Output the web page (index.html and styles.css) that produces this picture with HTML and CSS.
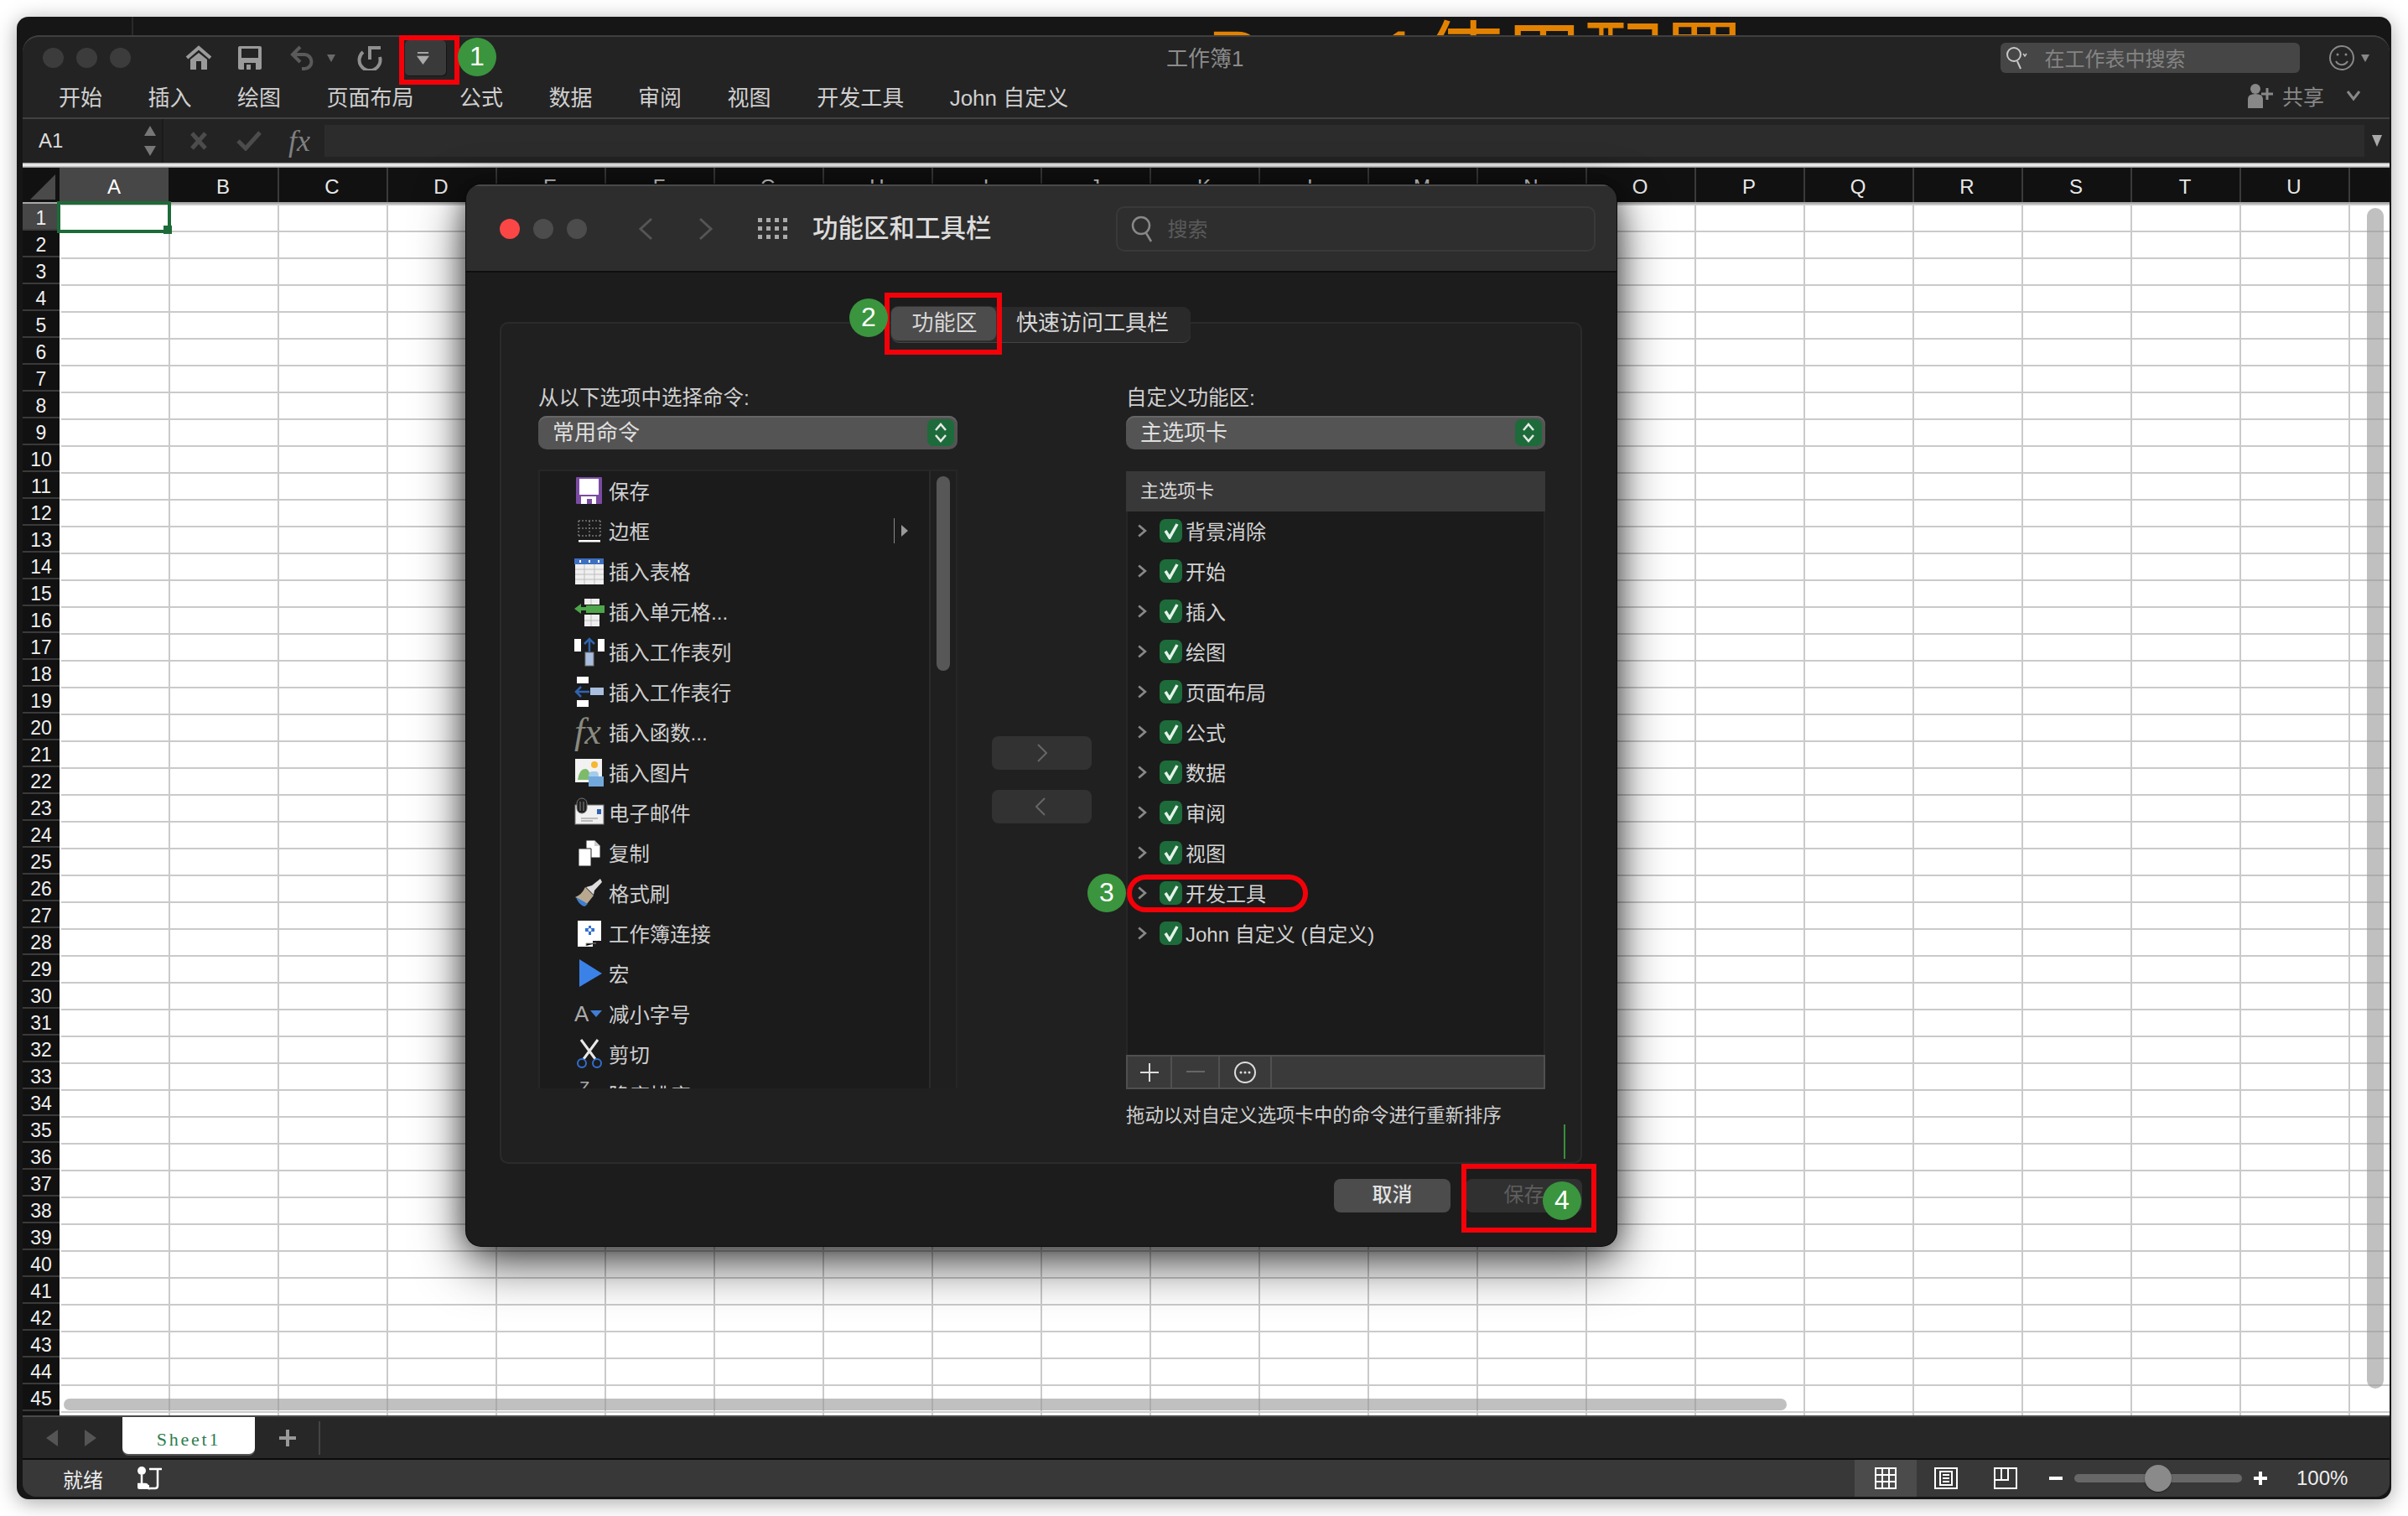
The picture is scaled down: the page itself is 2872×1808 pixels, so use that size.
FILE: index.html
```html
<!DOCTYPE html>
<html lang="zh">
<head>
<meta charset="utf-8">
<title>工作簿1</title>
<link rel="stylesheet" href="styles.css">
</head>
<body>
<div class="page">
  <div class="outer">
    <div class="strip"><span class="strip-line"></span><span class="strip-title">Part 1使用配置</span></div>
    <div class="app">
      <div class="toolbar">
        <div class="qat">
          <span class="tl"></span><span class="tl"></span><span class="tl"></span>
          <svg class="i-home" viewBox="0 0 32 30"><path d="M2 15 16 3l14 12" fill="none" stroke="#9a9a9a" stroke-width="4"/><path d="M6 17 16 9l10 8v12h-7V19h-6v10H6z" fill="#9a9a9a"/></svg>
          <svg class="i-save" viewBox="0 0 28 28"><path d="M2 0h24a2 2 0 0 1 2 2v24a2 2 0 0 1-2 2H2a2 2 0 0 1-2-2V2a2 2 0 0 1 2-2z" fill="#9a9a9a"/><rect x="4" y="3" width="20" height="11" fill="#232323"/><rect x="7" y="20" width="14" height="8" fill="#232323"/><rect x="10" y="22" width="5" height="6" fill="#9a9a9a"/></svg>
          <svg class="i-undo" viewBox="0 0 30 30"><path d="M12 2 3 11l9 9" fill="none" stroke="#5a5a5a" stroke-width="4"/><path d="M4 11h13a8.500 8.500 0 0 1 0 17h-3" fill="none" stroke="#5a5a5a" stroke-width="4"/></svg>
          <svg class="i-caret" viewBox="0 0 12 10"><path d="M1 1h10L6 10z" fill="#6a6a6a"/></svg>
          <svg class="i-redo" viewBox="0 0 32 30"><path d="M8 8a12.500 12.500 0 1 0 20 6" fill="none" stroke="#8f8f8f" stroke-width="4"/><path d="M29 3H16v14" fill="none" stroke="#8f8f8f" stroke-width="4"/></svg>
          <span class="qat-btn"><svg viewBox="0 0 16 16"><rect x="1" y="0" width="14" height="2" fill="#aaa"/><path d="M0 5h16l-8 11z" fill="#aaa"/></svg></span>
          <span class="doc-title">工作簿1</span>
          <span class="search"><svg viewBox="0 0 26 30"><circle cx="10" cy="11" r="8" fill="none" stroke="#c8c8c8" stroke-width="2"/><path d="m14 19 4 9" stroke="#c8c8c8" stroke-width="2"/><path d="m21 10 2 3 2-3" fill="none" stroke="#c8c8c8" stroke-width="1.500"/></svg><span>在工作表中搜索</span></span>
          <svg class="i-smile" viewBox="0 0 32 32"><circle cx="16" cy="16" r="14" fill="none" stroke="#888" stroke-width="2"/><circle cx="11" cy="12" r="1.500" fill="#888"/><circle cx="21" cy="12" r="1.500" fill="#888"/><path d="M9 20a8 8 0 0 0 14 0" fill="none" stroke="#888" stroke-width="2"/></svg>
          <svg class="i-caret2" viewBox="0 0 12 12"><path d="M1 2h10L6 11z" fill="#888"/></svg>
        </div>
        <div class="ribbon">
          <span>开始</span><span>插入</span><span>绘图</span><span>页面布局</span><span>公式</span><span>数据</span><span>审阅</span><span>视图</span><span>开发工具</span><span>John 自定义</span>
          <span class="share"><svg viewBox="0 0 34 30"><circle cx="10" cy="7" r="6" fill="#888"/><path d="M1 30V19q0-6 9-6t9 6v11z" fill="#888"/><path d="M24 6v14M17 13h14" stroke="#888" stroke-width="3"/></svg><b>共享</b><svg class="share-chev" viewBox="0 0 18 14"><path d="m2 2 7 9 7-9" fill="none" stroke="#888" stroke-width="3"/></svg></span>
        </div>
      </div>
      <div class="formula">
        <div class="namebox"><span>A1</span><svg viewBox="0 0 16 38"><path d="M8 1l7 12H1zM8 37l7-12H1z" fill="#777"/></svg></div>
        <svg class="f-x" viewBox="0 0 22 24"><path d="m3 3 16 18M19 3 3 21" stroke="#4c4c4c" stroke-width="5"/></svg>
        <svg class="f-check" viewBox="0 0 30 24"><path d="M2 12l9 9L28 2" fill="none" stroke="#4c4c4c" stroke-width="5"/></svg>
        <span class="f-fx">fx</span>
        <div class="f-input"></div>
        <svg class="f-drop" viewBox="0 0 12 14"><path d="M0 0h12L6 14z" fill="#aaa"/></svg>
      </div>
      <div class="rule"></div>
      <div class="colhead">
        <div class="corner"><svg viewBox="0 0 30 30"><path d="M30 0v30H0z" fill="#4a4a4a"/></svg></div>
        <span class="col active">A</span><span class="col">B</span><span class="col">C</span><span class="col">D</span><span class="col">E</span><span class="col">F</span><span class="col">G</span><span class="col">H</span><span class="col">I</span><span class="col">J</span><span class="col">K</span><span class="col">L</span><span class="col">M</span><span class="col">N</span><span class="col">O</span><span class="col">P</span><span class="col">Q</span><span class="col">R</span><span class="col">S</span><span class="col">T</span><span class="col">U</span><span class="col"></span>
      </div>
      <div class="sheet">
        <div class="rows">
          <span class="active">1</span><span>2</span><span>3</span><span>4</span><span>5</span><span>6</span><span>7</span><span>8</span><span>9</span><span>10</span><span>11</span><span>12</span><span>13</span><span>14</span><span>15</span><span>16</span><span>17</span><span>18</span><span>19</span><span>20</span><span>21</span><span>22</span><span>23</span><span>24</span><span>25</span><span>26</span><span>27</span><span>28</span><span>29</span><span>30</span><span>31</span><span>32</span><span>33</span><span>34</span><span>35</span><span>36</span><span>37</span><span>38</span><span>39</span><span>40</span><span>41</span><span>42</span><span>43</span><span>44</span><span>45</span>
        </div>
        <div class="grid">
          <div class="sel"><i></i></div>
          <div class="vscroll"></div>
          <div class="hscroll"></div>
        </div>
      </div>
      <div class="tabbar">
        <svg class="nav-l" viewBox="0 0 14 20"><path d="M14 0v20L0 10z" fill="#555"/></svg>
        <svg class="nav-r" viewBox="0 0 14 20"><path d="M0 0v20l14-10z" fill="#555"/></svg>
        <div class="sheet-tab">Sheet1</div>
        <svg class="add" viewBox="0 0 20 20"><path d="M10 0v20M0 10h20" stroke="#999" stroke-width="4"/></svg>
        <span class="tab-sep"></span>
      </div>
      <div class="status">
        <span class="ready">就绪</span>
        <svg class="macro" viewBox="0 0 30 28"><circle cx="5" cy="5" r="5" fill="#fff"/><path d="M5 10v11M0 21h9q3 0 3 3t3 2h6q3 0 3-3V3H14M24 3h5" fill="none" stroke="#fff" stroke-width="2.500"/><path d="M0 22h14v5H2q-2 0-2-2z" fill="#fff"/></svg>
        <span class="view-btn on"><svg class="v-icon" viewBox="0 0 26 26"><path d="M1 1h24v24H1zM1 9h24M1 17h24M9 1v24M17 1v24" fill="none" stroke="#fff" stroke-width="2"/></svg></span>
        <svg class="v-page" viewBox="0 0 28 26"><path d="M1 1h26v24H1z" fill="none" stroke="#fff" stroke-width="2"/><path d="M7 5h14v16H7z" fill="none" stroke="#fff" stroke-width="2"/><path d="M10 9h8M10 13h8M10 17h8" stroke="#fff" stroke-width="2"/></svg>
        <svg class="v-break" viewBox="0 0 28 26"><path d="M1 1h26v24H1zM1 15h16V1M9 1v14" fill="none" stroke="#fff" stroke-width="2"/></svg>
        <svg class="zoom-minus" viewBox="0 0 16 4"><rect width="16" height="4" fill="#fff"/></svg>
        <span class="slider"><i></i></span>
        <svg class="zoom-plus" viewBox="0 0 16 16"><path d="M8 0v16M0 8h16" stroke="#fff" stroke-width="4"/></svg>
        <span class="pct">100%</span>
      </div>
    </div>
  </div>

  <div class="dialog">
    <div class="dlg-head">
      <span class="dl red"></span><span class="dl"></span><span class="dl"></span>
      <svg class="dn first" viewBox="0 0 18 28"><path d="M16 2 3 14l13 12" fill="none" stroke="#555" stroke-width="3"/></svg>
      <svg class="dn second" viewBox="0 0 18 28"><path d="m2 2 13 12L2 26" fill="none" stroke="#555" stroke-width="3"/></svg>
      <svg class="dgrid" viewBox="0 0 35 25"><g fill="#aaa"><rect x="0" y="0" width="5" height="5"/><rect x="10" y="0" width="5" height="5"/><rect x="20" y="0" width="5" height="5"/><rect x="30" y="0" width="5" height="5"/><rect x="0" y="10" width="5" height="5"/><rect x="10" y="10" width="5" height="5"/><rect x="20" y="10" width="5" height="5"/><rect x="30" y="10" width="5" height="5"/><rect x="0" y="20" width="5" height="5"/><rect x="10" y="20" width="5" height="5"/><rect x="20" y="20" width="5" height="5"/><rect x="30" y="20" width="5" height="5"/></g></svg>
      <span class="dlg-title">功能区和工具栏</span>
      <span class="dlg-search"><svg viewBox="0 0 30 32"><circle cx="12" cy="12" r="10" fill="none" stroke="#888" stroke-width="2.500"/><path d="m18 21 6 10" stroke="#888" stroke-width="2.500"/></svg><span>搜索</span></span>
    </div>
    <div class="dlg-body">
      <div class="panel">
        <div class="segs"><span class="seg on">功能区</span><span class="seg">快速访问工具栏</span></div>
        <div class="pcol">
          <div class="plabel">从以下选项中选择命令:</div>
          <div class="select"><span>常用命令</span><span class="stepper"><svg viewBox="0 0 14 24"><path d="m1 9 6-7 6 7M1 15l6 7 6-7" fill="none" stroke="#e8e8e8" stroke-width="2.500"/></svg></span></div>
          <div class="cmdlist">
            <div class="cmds">
              <div class="cmd"><svg class="ic" viewBox="0 0 36 36"><rect x="2" y="2" width="31" height="32" rx="1" fill="#7b4ba3"/><rect x="6" y="4" width="23" height="19" fill="#fff"/><path d="M8 34V25h18v9h-5v-6h-6v6z" fill="#fff"/></svg><span>保存</span></div>
              <div class="cmd"><svg class="ic" viewBox="0 0 36 36"><path d="M5 6h26M5 15h26M5 24h26M5 6v20M18 6v20M31 6v20" fill="none" stroke="#777" stroke-width="1.500" stroke-dasharray="2 2"/><rect x="5" y="29" width="26" height="2.500" fill="#fff"/></svg><span>边框</span><span class="more"><svg viewBox="0 0 8 14"><path d="M0 0v14l8-7z" fill="#999"/></svg></span></div>
              <div class="cmd"><svg class="ic" viewBox="0 0 36 36"><rect x="1" y="5" width="34" height="29" fill="#efefef"/><rect x="0" y="3" width="35" height="7" fill="#3d6fc0"/><path d="M1 16h34M1 22h34M1 28h34M12 10v24M24 10v24" stroke="#bdbdbd" stroke-width="1"/><path d="M7 5v3M18 5v3M29 5v3" stroke="#fff" stroke-width="2"/></svg><span>插入表格</span></div>
              <div class="cmd"><svg class="ic" viewBox="0 0 36 36"><path d="M12 3h18v7H12zM12 22h18v14H12z" fill="#eee"/><path d="M20 3v7M20 22v14M12 29h18" stroke="#bbb"/><rect x="14" y="11" width="22" height="9" fill="#4da64a"/><path d="M0 15l8-6v12z" fill="#4da64a"/><rect x="6" y="13" width="8" height="4" fill="#4da64a"/></svg><span>插入单元格...</span></div>
              <div class="cmd"><svg class="ic" viewBox="0 0 36 36"><rect x="0" y="3" width="8" height="15" fill="#fff"/><rect x="28" y="3" width="8" height="15" fill="#fff"/><rect x="13" y="19" width="10" height="16" fill="#a9bedf" stroke="#777"/><path d="M18 18V4M12 9l6-6 6 6" fill="none" stroke="#2f65b0" stroke-width="2.500"/></svg><span>插入工作表列</span></div>
              <div class="cmd"><svg class="ic" viewBox="0 0 36 36"><rect x="3" y="0" width="14" height="8" fill="#fff"/><rect x="3" y="28" width="14" height="8" fill="#fff"/><rect x="19" y="13" width="16" height="9" fill="#a9bedf"/><path d="M18 18H3M8 12l-6 6 6 6" fill="none" stroke="#2f65b0" stroke-width="2.500"/></svg><span>插入工作表行</span></div>
              <div class="cmd"><span class="ic ic-fx">fx</span><span>插入函数...</span></div>
              <div class="cmd"><svg class="ic" viewBox="0 0 36 36"><rect x="1" y="2" width="32" height="28" fill="#f2f2f2"/><path d="M4 27q2-14 10-13 5 1 5 13z" fill="#7dbb6a"/><circle cx="24" cy="9" r="4" fill="#f6b731"/><path d="M17 23h18v12H17z" fill="#72a9dc"/><path d="M17 23q0-6 4-6h5q3 0 3 6z" fill="#a5cbec"/></svg><span>插入图片</span></div>
              <div class="cmd"><svg class="ic" viewBox="0 0 36 36"><rect x="1" y="9" width="34" height="23" fill="#f0f0f0" stroke="#777"/><rect x="27" y="14" width="5" height="6" fill="#2f65b0"/><path d="M8 25h20M8 28h14" stroke="#aaa" stroke-width="1.500"/><rect x="3" y="1" width="12" height="18" rx="6" fill="#1f1f1f" stroke="#777"/><path d="M7 5v11M11 5v11" stroke="#888"/></svg><span>电子邮件</span></div>
              <div class="cmd"><svg class="ic" viewBox="0 0 36 36"><path d="M14 3h10l7 7v14H14z" fill="#fff" stroke="#222"/><path d="M24 3v7h7" fill="#ccc"/><path d="M5 13h15v21H5z" fill="#fff" stroke="#222"/></svg><span>复制</span></div>
              <div class="cmd"><svg class="ic" viewBox="0 0 36 36"><path d="M13 11 23 21 15 31 1 23q8-3 12-12z" fill="#b7a88f"/><path d="M5 25l10 6-2 3z" fill="#3d7fd0"/><path d="M2 23l14 8-4 3q-7-2-10-11z" fill="#3d7fd0"/><path d="M14 11l7-2 10-8 2 4-9 10-1 5z" fill="#ddd"/></svg><span>格式刷</span></div>
              <div class="cmd"><svg class="ic" viewBox="0 0 36 36"><path d="M4 3h28v24H22v7H4z" fill="#fff"/><path d="M13 12h4V9h3v3h4v4h-4v4h-3v-4h-4z" fill="#2f6fd0"/><circle cx="18.500" cy="14" r="2" fill="#fff"/><path d="M14 33v-3h12" stroke="#999"/></svg><span>工作簿连接</span></div>
              <div class="cmd"><svg class="ic" viewBox="0 0 36 36"><path d="M6 1v33l27-16z" fill="#3b82e8"/></svg><span>宏</span></div>
              <div class="cmd"><span class="ic ic-a"><b>A</b><svg viewBox="0 0 14 8"><path d="M0 0h14L7 8z" fill="#3f7fd6"/></svg></span><span>减小字号</span></div>
              <div class="cmd"><svg class="ic" viewBox="0 0 36 36"><path d="M8 1l17 23M28 1 11 24" stroke="#e8e8e8" stroke-width="3"/><circle cx="9" cy="29" r="5" fill="none" stroke="#2f6fd0" stroke-width="2"/><circle cx="27" cy="29" r="5" fill="none" stroke="#2f6fd0" stroke-width="2"/></svg><span>剪切</span></div>
              <div class="cmd"><span class="ic ic-z">Z</span><span>降序排序</span></div>
            </div>
            <div class="lscroll"><i></i></div>
          </div>
        </div>
        <div class="pmid">
          <span class="arrow"><svg viewBox="0 0 12 22"><path d="m1 1 10 10L1 21" fill="none" stroke="#666" stroke-width="2"/></svg></span>
          <span class="arrow back"><svg viewBox="0 0 12 22"><path d="M11 1 1 11l10 10" fill="none" stroke="#666" stroke-width="2"/></svg></span>
        </div>
        <div class="pcol">
          <div class="plabel">自定义功能区:</div>
          <div class="select"><span>主选项卡</span><span class="stepper"><svg viewBox="0 0 14 24"><path d="m1 9 6-7 6 7M1 15l6 7 6-7" fill="none" stroke="#e8e8e8" stroke-width="2.500"/></svg></span></div>
          <div class="tablist">
            <div class="tl-head">主选项卡</div>
            <div class="trow"><svg class="chev" viewBox="0 0 11 16"><path d="m2 2 7 6-7 6" fill="none" stroke="#888" stroke-width="2.500"/></svg><span class="chk"><svg viewBox="0 0 20 20"><path d="M3 10l5 8L17 2" fill="none" stroke="#e6f2ea" stroke-width="3.500"/></svg></span><span>背景消除</span></div>
            <div class="trow"><svg class="chev" viewBox="0 0 11 16"><path d="m2 2 7 6-7 6" fill="none" stroke="#888" stroke-width="2.500"/></svg><span class="chk"><svg viewBox="0 0 20 20"><path d="M3 10l5 8L17 2" fill="none" stroke="#e6f2ea" stroke-width="3.500"/></svg></span><span>开始</span></div>
            <div class="trow"><svg class="chev" viewBox="0 0 11 16"><path d="m2 2 7 6-7 6" fill="none" stroke="#888" stroke-width="2.500"/></svg><span class="chk"><svg viewBox="0 0 20 20"><path d="M3 10l5 8L17 2" fill="none" stroke="#e6f2ea" stroke-width="3.500"/></svg></span><span>插入</span></div>
            <div class="trow"><svg class="chev" viewBox="0 0 11 16"><path d="m2 2 7 6-7 6" fill="none" stroke="#888" stroke-width="2.500"/></svg><span class="chk"><svg viewBox="0 0 20 20"><path d="M3 10l5 8L17 2" fill="none" stroke="#e6f2ea" stroke-width="3.500"/></svg></span><span>绘图</span></div>
            <div class="trow"><svg class="chev" viewBox="0 0 11 16"><path d="m2 2 7 6-7 6" fill="none" stroke="#888" stroke-width="2.500"/></svg><span class="chk"><svg viewBox="0 0 20 20"><path d="M3 10l5 8L17 2" fill="none" stroke="#e6f2ea" stroke-width="3.500"/></svg></span><span>页面布局</span></div>
            <div class="trow"><svg class="chev" viewBox="0 0 11 16"><path d="m2 2 7 6-7 6" fill="none" stroke="#888" stroke-width="2.500"/></svg><span class="chk"><svg viewBox="0 0 20 20"><path d="M3 10l5 8L17 2" fill="none" stroke="#e6f2ea" stroke-width="3.500"/></svg></span><span>公式</span></div>
            <div class="trow"><svg class="chev" viewBox="0 0 11 16"><path d="m2 2 7 6-7 6" fill="none" stroke="#888" stroke-width="2.500"/></svg><span class="chk"><svg viewBox="0 0 20 20"><path d="M3 10l5 8L17 2" fill="none" stroke="#e6f2ea" stroke-width="3.500"/></svg></span><span>数据</span></div>
            <div class="trow"><svg class="chev" viewBox="0 0 11 16"><path d="m2 2 7 6-7 6" fill="none" stroke="#888" stroke-width="2.500"/></svg><span class="chk"><svg viewBox="0 0 20 20"><path d="M3 10l5 8L17 2" fill="none" stroke="#e6f2ea" stroke-width="3.500"/></svg></span><span>审阅</span></div>
            <div class="trow"><svg class="chev" viewBox="0 0 11 16"><path d="m2 2 7 6-7 6" fill="none" stroke="#888" stroke-width="2.500"/></svg><span class="chk"><svg viewBox="0 0 20 20"><path d="M3 10l5 8L17 2" fill="none" stroke="#e6f2ea" stroke-width="3.500"/></svg></span><span>视图</span></div>
            <div class="trow"><svg class="chev" viewBox="0 0 11 16"><path d="m2 2 7 6-7 6" fill="none" stroke="#888" stroke-width="2.500"/></svg><span class="chk"><svg viewBox="0 0 20 20"><path d="M3 10l5 8L17 2" fill="none" stroke="#e6f2ea" stroke-width="3.500"/></svg></span><span>开发工具</span></div>
            <div class="trow"><svg class="chev" viewBox="0 0 11 16"><path d="m2 2 7 6-7 6" fill="none" stroke="#888" stroke-width="2.500"/></svg><span class="chk"><svg viewBox="0 0 20 20"><path d="M3 10l5 8L17 2" fill="none" stroke="#e6f2ea" stroke-width="3.500"/></svg></span><span>John 自定义 (自定义)</span></div>
          </div>
          <div class="tl-tools">
            <span class="tt t1"><svg viewBox="0 0 22 22"><path d="M11 0v22M0 11h22" stroke="#ddd" stroke-width="2"/></svg></span>
            <span class="tt t2"><svg viewBox="0 0 22 4"><rect width="22" height="2" fill="#666"/></svg></span>
            <span class="tt t3"><svg viewBox="0 0 26 26"><circle cx="13" cy="13" r="12" fill="none" stroke="#ddd" stroke-width="2"/><circle cx="8" cy="13" r="1.500" fill="#ddd"/><circle cx="13" cy="13" r="1.500" fill="#ddd"/><circle cx="18" cy="13" r="1.500" fill="#ddd"/></svg></span>
          </div>
          <div class="hint">拖动以对自定义选项卡中的命令进行重新排序</div>
        </div>
        <span class="gline"></span>
      </div>
      <div class="dlg-foot">
        <span class="btn">取消</span>
        <span class="btn off">保存</span>
      </div>
    </div>
  </div>

  <div class="redbox rb1"></div>
  <div class="redbox rb2"></div>
  <div class="redbox rb3"></div>
  <div class="redbox rb4"></div>
  <span class="badge b1">1</span>
  <span class="badge b2">2</span>
  <span class="badge b3">3</span>
  <span class="badge b4">4</span>
</div>
</body>
</html>
```

FILE: styles.css
```css
* { box-sizing: border-box; }
html, body { margin: 0; padding: 0; background: #fff; }
body { font-family: "Liberation Sans", "Noto Sans CJK SC", sans-serif; color: #d2d2d2; font-size: 24px; }
svg { display: block; flex: none; }
.page { position: relative; width: 2872px; height: 1808px; padding: 20px; overflow: hidden; }

/* outer window */
.outer { width: 2832px; height: 1768px; background: #161616; border-radius: 14px; padding: 0 2px 3px 7px; box-shadow: 0 4px 24px rgba(0,0,0,.35); display: flex; flex-direction: column; }
.strip { height: 22px; position: relative; overflow: hidden; flex: none; }
.strip-line { position: absolute; left: 130px; top: 0; width: 2px; height: 22px; background: #2a2a2a; }
.strip-title { position: absolute; left: 1413px; top: 3px; font-size: 96px; line-height: 96px; color: #e38200; white-space: nowrap; }
.app { flex: 1; display: flex; flex-direction: column; border-radius: 20px 20px 16px 16px; overflow: hidden; background: #232323; box-shadow: inset 0 2px 0 #444; }

/* toolbar */
.toolbar { height: 100px; flex: none; border-bottom: 2px solid #414141; background: #232323; border-top: 2px solid #404040; border-radius: 20px 20px 0 0; }
.qat { height: 50px; display: flex; align-items: center; padding-left: 24px; position: relative; }
.tl { width: 25px; height: 24px; border-radius: 50%; background: #3c3c3c; margin-right: 15px; flex: none; }
.i-home { width: 32px; height: 30px; margin-left: 50px; }
.i-save { width: 28px; height: 28px; margin-left: 31px; }
.i-undo { width: 30px; height: 30px; margin-left: 34px; }
.i-caret { width: 12px; height: 10px; margin-left: 13px; }
.i-redo { width: 32px; height: 30px; margin-left: 24px; }
.qat-btn { width: 49px; height: 42px; margin-left: 26px; padding-right: 6px; background: #3a3a3a; border-radius: 5px; box-shadow: 1px 1px 0 #151515; display: flex; align-items: center; justify-content: center; }
.qat-btn svg { width: 15px; height: 15px; }
.doc-title { margin-left: 859px; padding-bottom: 4px; color: #8c8c8c; font-size: 26px; white-space: nowrap; }
.search { margin-left: 903px; width: 357px; height: 36px; background: #464646; border-radius: 6px; display: flex; align-items: center; padding-left: 6px; color: #848484; flex: none; }
.search svg { width: 26px; height: 30px; margin-right: 20px; }
.search span { padding-bottom: 2px; }
.i-smile { width: 32px; height: 32px; margin-left: 34px; }
.i-caret2 { width: 12px; height: 12px; margin-left: 6px; }
.ribbon { height: 46px; display: flex; align-items: center; padding: 0 0 6px 43px; font-size: 26px; gap: 54.5px; color: #cfcfcf; white-space: nowrap; }
.share { margin-left: auto; display: flex; align-items: center; color: #888; font-size: 25px; padding-right: 34px; }
.share svg { width: 34px; height: 30px; }
.share b { font-weight: 400; margin-left: 8px; }
.share .share-chev { width: 18px; height: 14px; margin-left: 26px; }

/* formula bar */
.formula { height: 52px; flex: none; display: flex; align-items: center; background: #232323; position: relative; }
.namebox { width: 168px; height: 52px; background: #212121; border-right: 2px solid #1a1a1a; display: flex; align-items: center; padding-left: 19px; position: relative; color: #ddd; }
.namebox svg { position: absolute; left: 144px; top: 7px; width: 16px; height: 38px; }
.f-x { width: 22px; height: 24px; margin-left: 31px; }
.f-check { width: 30px; height: 24px; margin-left: 34px; }
.f-fx { font-family: "Liberation Serif", serif; font-style: italic; font-size: 36px; color: #808080; margin-left: 32px; width: 32px; }
.f-input { margin-left: 11px; width: 2433px; height: 38px; background: #2c2c2c; flex: none; }
.f-drop { width: 12px; height: 14px; margin-left: 9px; }
.rule { height: 6px; flex: none; background: linear-gradient(#8a8a8a, #f0f0f0 35%, #e8e8e8 60%, #8a8a8a); }

/* headers */
.colhead { height: 43px; flex: none; background: #111; display: flex; border-bottom: 2px solid #a8a8a8; overflow: hidden; }
.corner { width: 44px; flex: none; padding: 8px 0 0 9px; }
.corner svg { width: 30px; height: 30px; }
.col { width: 130px; flex: none; text-align: center; font-size: 24px; line-height: 45px; color: #e8e8e8; box-shadow: 2px 0 0 #3a3a3a; }
.col.active { background: #474747; color: #fff; box-shadow: none; }
.sheet { flex: none; height: 1445px; display: flex; }
.rows { width: 44px; flex: none; background: #111; display: flex; flex-direction: column; overflow: hidden; }
.rows span { height: 32px; flex: none; text-align: center; font-size: 23px; line-height: 34px; color: #f0f0f0; border-bottom: 2px solid #3a3a3a; }
.rows .active { background: #474747; }
.grid { flex: 1; position: relative; background-color: #fff;
  background-image: linear-gradient(#fff, #fff), linear-gradient(to right, #cacaca 2px, transparent 2px), linear-gradient(#cacaca 2px, transparent 2px);
  background-size: 2px 100%, 130px 32px, 130px 32px;
  background-repeat: no-repeat, repeat, repeat; }
.sel { position: absolute; left: -3px; top: -3px; width: 136px; height: 38px; border: 4px solid #1d6b38; }
.sel i { position: absolute; right: -5px; bottom: -5px; width: 10px; height: 10px; background: #1d6b38; }
.vscroll { position: absolute; left: 2752px; top: 5px; width: 20px; height: 1408px; border-radius: 10px; background: rgba(150,150,150,.6); }
.hscroll { position: absolute; left: 5px; top: 1425px; width: 2055px; height: 14px; border-radius: 7px; background: rgba(150,150,150,.6); }

/* tabs */
.tabbar { height: 53px; flex: none; background: #272727; border-top: 2px solid #4a4a4a; border-bottom: 2px solid #0c0c0c; display: flex; align-items: center; padding-left: 28px; }
.nav-l, .nav-r { width: 14px; height: 20px; }
.nav-r { margin-left: 32px; }
.sheet-tab { width: 158px; height: 44px; margin-left: 31px; align-self: flex-start; background: #fff; border-radius: 0 0 7px 7px; box-shadow: 0 2px 0 #555; text-align: center; font-family: "Liberation Serif", serif; font-size: 22px; letter-spacing: 2.8px; line-height: 54px; color: #2f7d50; }
.add { width: 20px; height: 20px; margin-left: 29px; }
.tab-sep { width: 2px; height: 40px; background: #444; margin-left: 27px; }

/* status */
.status { flex: 1; background: #383838; display: flex; align-items: center; padding-left: 48px; color: #eee; }
.ready { font-size: 24px; width: 48px; }
.macro { width: 30px; height: 28px; margin-left: 41px; }
.view-btn { height: 44px; width: 74px; margin-left: 2018px; display: flex; align-items: center; justify-content: center; }
.view-btn.on { background: #4b4b4b; }
.v-icon { width: 26px; height: 26px; }
.v-page { width: 28px; height: 26px; margin-left: 21px; }
.v-break { width: 28px; height: 26px; margin-left: 43px; }
.zoom-minus { width: 16px; height: 4px; margin-left: 38px; }
.slider { width: 200px; height: 10px; margin-left: 14px; background: #676767; border-radius: 5px; position: relative; flex: none; }
.slider i { position: absolute; left: 84px; top: -11px; width: 32px; height: 32px; border-radius: 50%; background: #8a8a8a; box-shadow: 0 1px 2px rgba(0,0,0,.4); }
.zoom-plus { width: 16px; height: 16px; margin-left: 14px; }
.pct { font-size: 24px; margin-left: 35px; }

/* dialog */
.dialog { position: absolute; left: 556px; top: 220px; width: 1372px; height: 1266px; border-radius: 18px; overflow: hidden; background: #1c1c1c; box-shadow: 0 0 0 1px #0c0c0c, 0 20px 60px rgba(0,0,0,.72), 0 0 30px rgba(0,0,0,.4); display: flex; flex-direction: column; }
.dlg-head { height: 105px; flex: none; background: #2d2d2d; border-top: 2px solid #4a4a4a; border-bottom: 2px solid #0f0f0f; display: flex; align-items: center; padding-left: 40px; }
.dl { width: 24px; height: 24px; border-radius: 50%; background: #4c4c4c; margin-right: 16px; flex: none; }
.dl.red { background: #fb4646; }
.dn { width: 18px; height: 28px; }
.dn.first { margin-left: 45px; }
.dn.second { margin-left: 54px; }
.dgrid { width: 35px; height: 25px; margin-left: 53px; }
.dlg-title { margin-left: 30px; padding-bottom: 6px; font-size: 30.500px; font-weight: 500; color: #dcdcdc; white-space: nowrap; }
.dlg-search { margin-left: 148px; width: 572px; height: 54px; border: 2px solid #393939; border-radius: 10px; background: #2e2e2e; display: flex; align-items: center; padding-left: 16px; color: #5a5a5a; flex: none; }
.dlg-search svg { width: 30px; height: 32px; margin-right: 14px; }
.dlg-search span { padding-bottom: 2px; }
.dlg-body { flex: 1; padding: 59px 41px 0 40px; }
.panel { position: relative; height: 1004px; background: #202020; border: 2px solid #2b2b2b; border-radius: 10px; padding: 72px 0 0 44px; display: flex; }
.segs { position: absolute; left: 465px; top: -20px; height: 42px; display: flex; background: #2a2a2a; border-radius: 9px; box-shadow: 0 1px 0 #444; }
.seg { font-size: 26px; line-height: 38px; height: 40px; color: #d8d8d8; white-space: nowrap; }
.seg:first-child { width: 125px; text-align: center; padding-left: 2px; }
.seg.on { background: #4c4c4c; border-radius: 8px; box-shadow: 0 0 0 1px #333; }
.seg:last-child { padding: 0 26px 0 24px; }
.pcol { width: 500px; flex: none; }
.plabel { height: 30px; line-height: 33px; font-size: 24.500px; color: #cfcfcf; white-space: nowrap; }
.select { margin-top: 8px; height: 40px; background: #545454; border-radius: 10px; box-shadow: inset 0 2px 0 #666; display: flex; align-items: center; justify-content: space-between; padding: 0 4px 0 17px; font-size: 26px; color: #dedede; }
.select > span:first-child { margin-bottom: 6px; }
.stepper { width: 32px; height: 32px; border-radius: 7px; background: #1d6b3a; display: flex; align-items: center; justify-content: center; }
.stepper svg { width: 14px; height: 24px; }
.cmdlist { margin-top: 24px; height: 738px; background: #1b1b1b; border: 2px solid #262626; border-bottom: 0; display: flex; overflow: hidden; }
.cmds { width: 466px; flex: none; border-right: 2px solid #2b2b2b; }
.cmd { height: 48px; display: flex; align-items: center; padding: 0 0 3px 41px; font-size: 24.400px; color: #cfcfcf; white-space: nowrap; }
.ic { width: 36px; height: 36px; margin-right: 5px; flex: none; }
.ic-fx { font-family: "Liberation Serif", serif; font-style: italic; font-size: 44px; line-height: 36px; color: #8a8a80; }
.ic-a { display: flex; align-items: center; color: #aaa; font-size: 26px; line-height: 36px; }
.ic-a b { font-weight: 400; margin-right: 2px; }
.ic-a svg { width: 14px; height: 8px; }
.ic-z { font-size: 20px; line-height: 20px; color: #aaa; padding-left: 6px; }
.more { margin-left: 291px; height: 30px; border-left: 1px solid #888; padding-left: 8px; display: flex; align-items: center; }
.more svg { width: 8px; height: 14px; }
.lscroll { flex: 1; background: #1f1f1f; padding: 6px 0 0 7px; }
.lscroll i { display: block; width: 16px; height: 232px; border-radius: 8px; background: #575757; }
.pmid { width: 119px; margin: 0 41px; flex: none; display: flex; flex-direction: column; padding-top: 420px; gap: 24px; }
.arrow { height: 40px; background: #323232; border-radius: 8px; display: flex; align-items: center; justify-content: center; }
.arrow svg { width: 12px; height: 22px; }
.arrow.back svg { margin-left: -3px; }
.tablist { margin-top: 26px; height: 696px; background: #1b1b1b; border-left: 2px solid #262626; border-right: 2px solid #262626; }
.tl-head { height: 48px; background: #383838; margin: 0 -2px; padding-left: 17px; font-size: 22px; line-height: 48px; color: #d8d8d8; }
.trow { height: 48px; display: flex; align-items: center; padding: 0 0 3px 11px; color: #d2d2d2; white-space: nowrap; }
.chev { width: 12px; height: 18px; margin-right: 15px; }
.chk { width: 27px; height: 28px; background: #1d6b3a; border-radius: 7px; margin-right: 4px; display: flex; align-items: center; justify-content: center; flex: none; }
.chk svg { width: 20px; height: 20px; }
.tl-tools { height: 41px; background: #3a3a3a; border: 2px solid #505050; display: flex; align-items: center; }
.tt { height: 37px; display: flex; align-items: center; justify-content: center; border-right: 2px solid #505050; }
.t1 { width: 53px; }
.t2 { width: 57px; }
.t3 { width: 62px; }
.t1 svg { width: 22px; height: 22px; }
.t2 svg { width: 22px; height: 4px; }
.t3 svg { width: 26px; height: 26px; }
.hint { margin-top: 16px; font-size: 22.400px; line-height: 31px; color: #d0d0d0; white-space: nowrap; }
.gline { position: absolute; left: 1267px; top: 955px; width: 2px; height: 41px; background: #3a8f3d; }
.dlg-foot { margin-top: 18px; display: flex; justify-content: flex-end; gap: 18px; }
.btn { width: 139px; height: 40px; border-radius: 8px; background: #4c4c4c; color: #e2e2e2; text-align: center; line-height: 38px; font-size: 24px; font-weight: 500; }
.btn.off { background: #303030; color: #5e5e5e; font-weight: 400; }

/* annotations */
.redbox { position: absolute; border: 6px solid #f40009; }
.rb1 { left: 476px; top: 42px; width: 72px; height: 59px; }
.rb2 { left: 1055px; top: 349px; width: 140px; height: 74px; }
.rb3 { left: 1344px; top: 1043px; width: 216px; height: 45px; border-radius: 23px; }
.rb4 { left: 1743px; top: 1388px; width: 161px; height: 82px; }
.badge { position: absolute; width: 46px; height: 46px; border-radius: 50%; background: #3a953e; color: #fff; font-size: 32px; line-height: 44px; text-align: center; }
.b1 { left: 546px; top: 45px; }
.b2 { left: 1013px; top: 356px; }
.b3 { left: 1297px; top: 1042px; }
.b4 { left: 1840px; top: 1409px; }
```
